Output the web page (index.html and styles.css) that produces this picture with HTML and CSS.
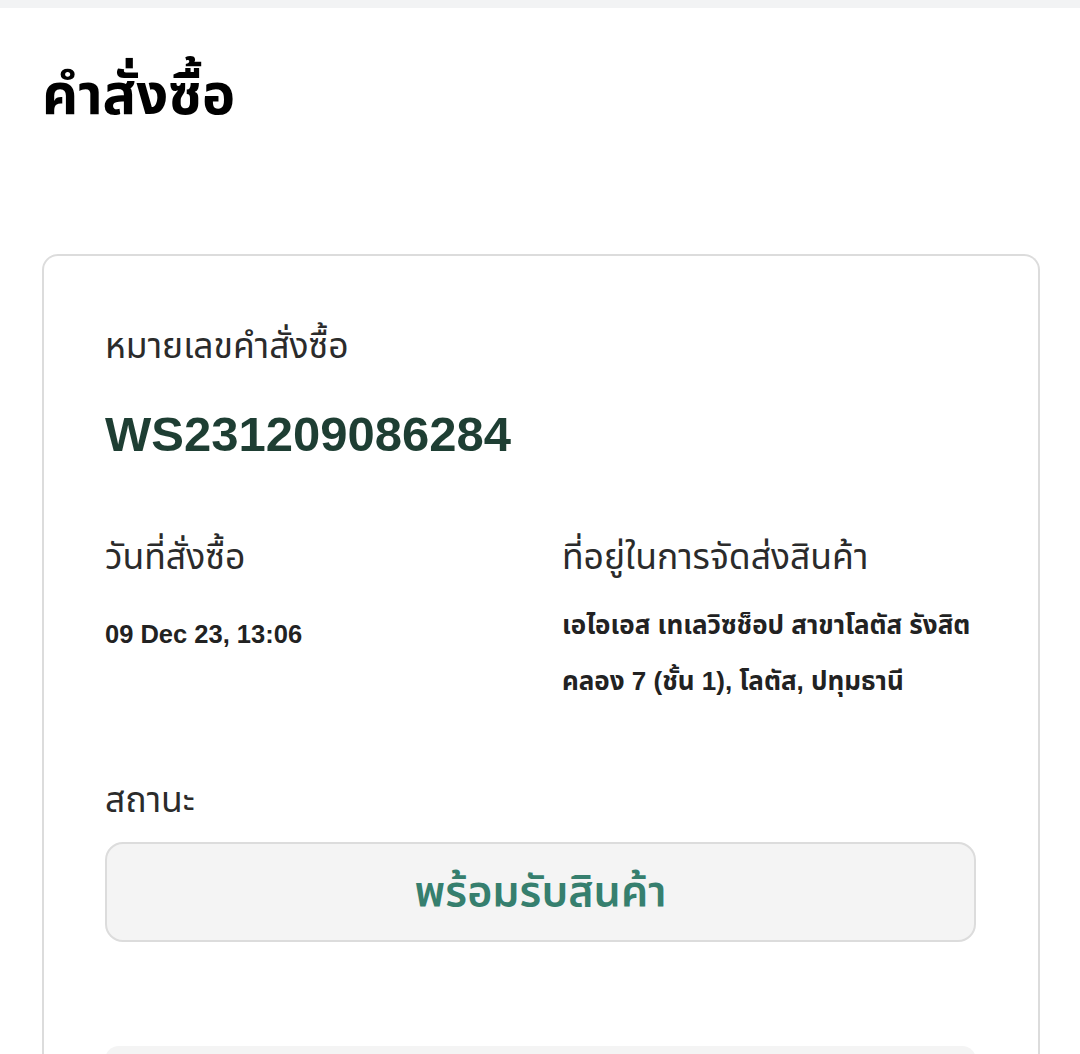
FILE: index.html
```html
<!DOCTYPE html>
<html lang="th">
<head>
<meta charset="utf-8">
<link rel="stylesheet" href="styles.css">
</head>
<body>
<div class="topbar"></div>
<main class="page">
  <h1 class="title">คำสั่งซื้อ</h1>
  <section class="card">
    <div class="label">หมายเลขคำสั่งซื้อ</div>
    <div class="order-no">WS231209086284</div>
    <div class="cols">
      <div class="col">
        <div class="label">วันที่สั่งซื้อ</div>
        <div class="value date">09 Dec 23, 13:06</div>
      </div>
      <div class="col">
        <div class="label">ที่อยู่ในการจัดส่งสินค้า</div>
        <div class="value address">เอไอเอส เทเลวิซช็อป สาขาโลตัส รังสิต<br>คลอง 7 (ชั้น 1), โลตัส, ปทุมธานี</div>
      </div>
    </div>
    <div class="label status-label">สถานะ</div>
    <div class="status">พร้อมรับสินค้า</div>
    <div class="next-box"></div>
  </section>
</main>
</body>
</html>
```
FILE: styles.css
```css
html, body {
  margin: 0;
  padding: 0;
  background: #ffffff;
  height: 1054px;
  overflow: hidden;
  font-family: "Liberation Sans", "Noto Sans Thai", "Noto Sans", sans-serif;
  color: #333;
}
.topbar {
  height: 8px;
  background: #f2f3f4;
}
.page {
  padding: 0 40px 0 42px;
}
.title {
  margin: 51px 0 0 0;
  font-size: 56px;
  line-height: 72px;
  font-weight: 700;
  color: #000;
}
.card {
  margin-top: 123px;
  border: 2px solid #dcdcdc;
  border-bottom: none;
  border-radius: 16px 16px 0 0;
  padding: 68px 62px 0 61px;
  height: 900px;
  box-sizing: border-box;
}
.label {
  font-size: 35.5px;
  line-height: 44px;
  color: #2b2b2b;
}
.order-no {
  margin-top: 38px;
  font-size: 49px;
  line-height: 56px;
  font-weight: 700;
  color: #1e3e33;
}
.cols {
  display: grid;
  grid-template-columns: 457px 1fr;
  margin-top: 73px;
}
.value {
  font-size: 26px;
  line-height: 56px;
  font-weight: 700;
  color: #222;
}
.date {
  margin-top: 27px;
  font-size: 25.5px;
}
.address {
  margin-top: 18px;
}
.status-label {
  margin-top: 69px;
}
.status {
  margin-top: 20px;
  height: 100px;
  box-sizing: border-box;
  border: 2px solid #dcdcdc;
  border-radius: 18px;
  background: #f4f4f4;
  display: flex;
  align-items: center;
  justify-content: center;
  font-size: 43px;
  font-weight: 600;
  color: #367f6e;
}
.next-box {
  margin-top: 104px;
  height: 60px;
  background: #f4f4f4;
  border-radius: 14px;
}
```
